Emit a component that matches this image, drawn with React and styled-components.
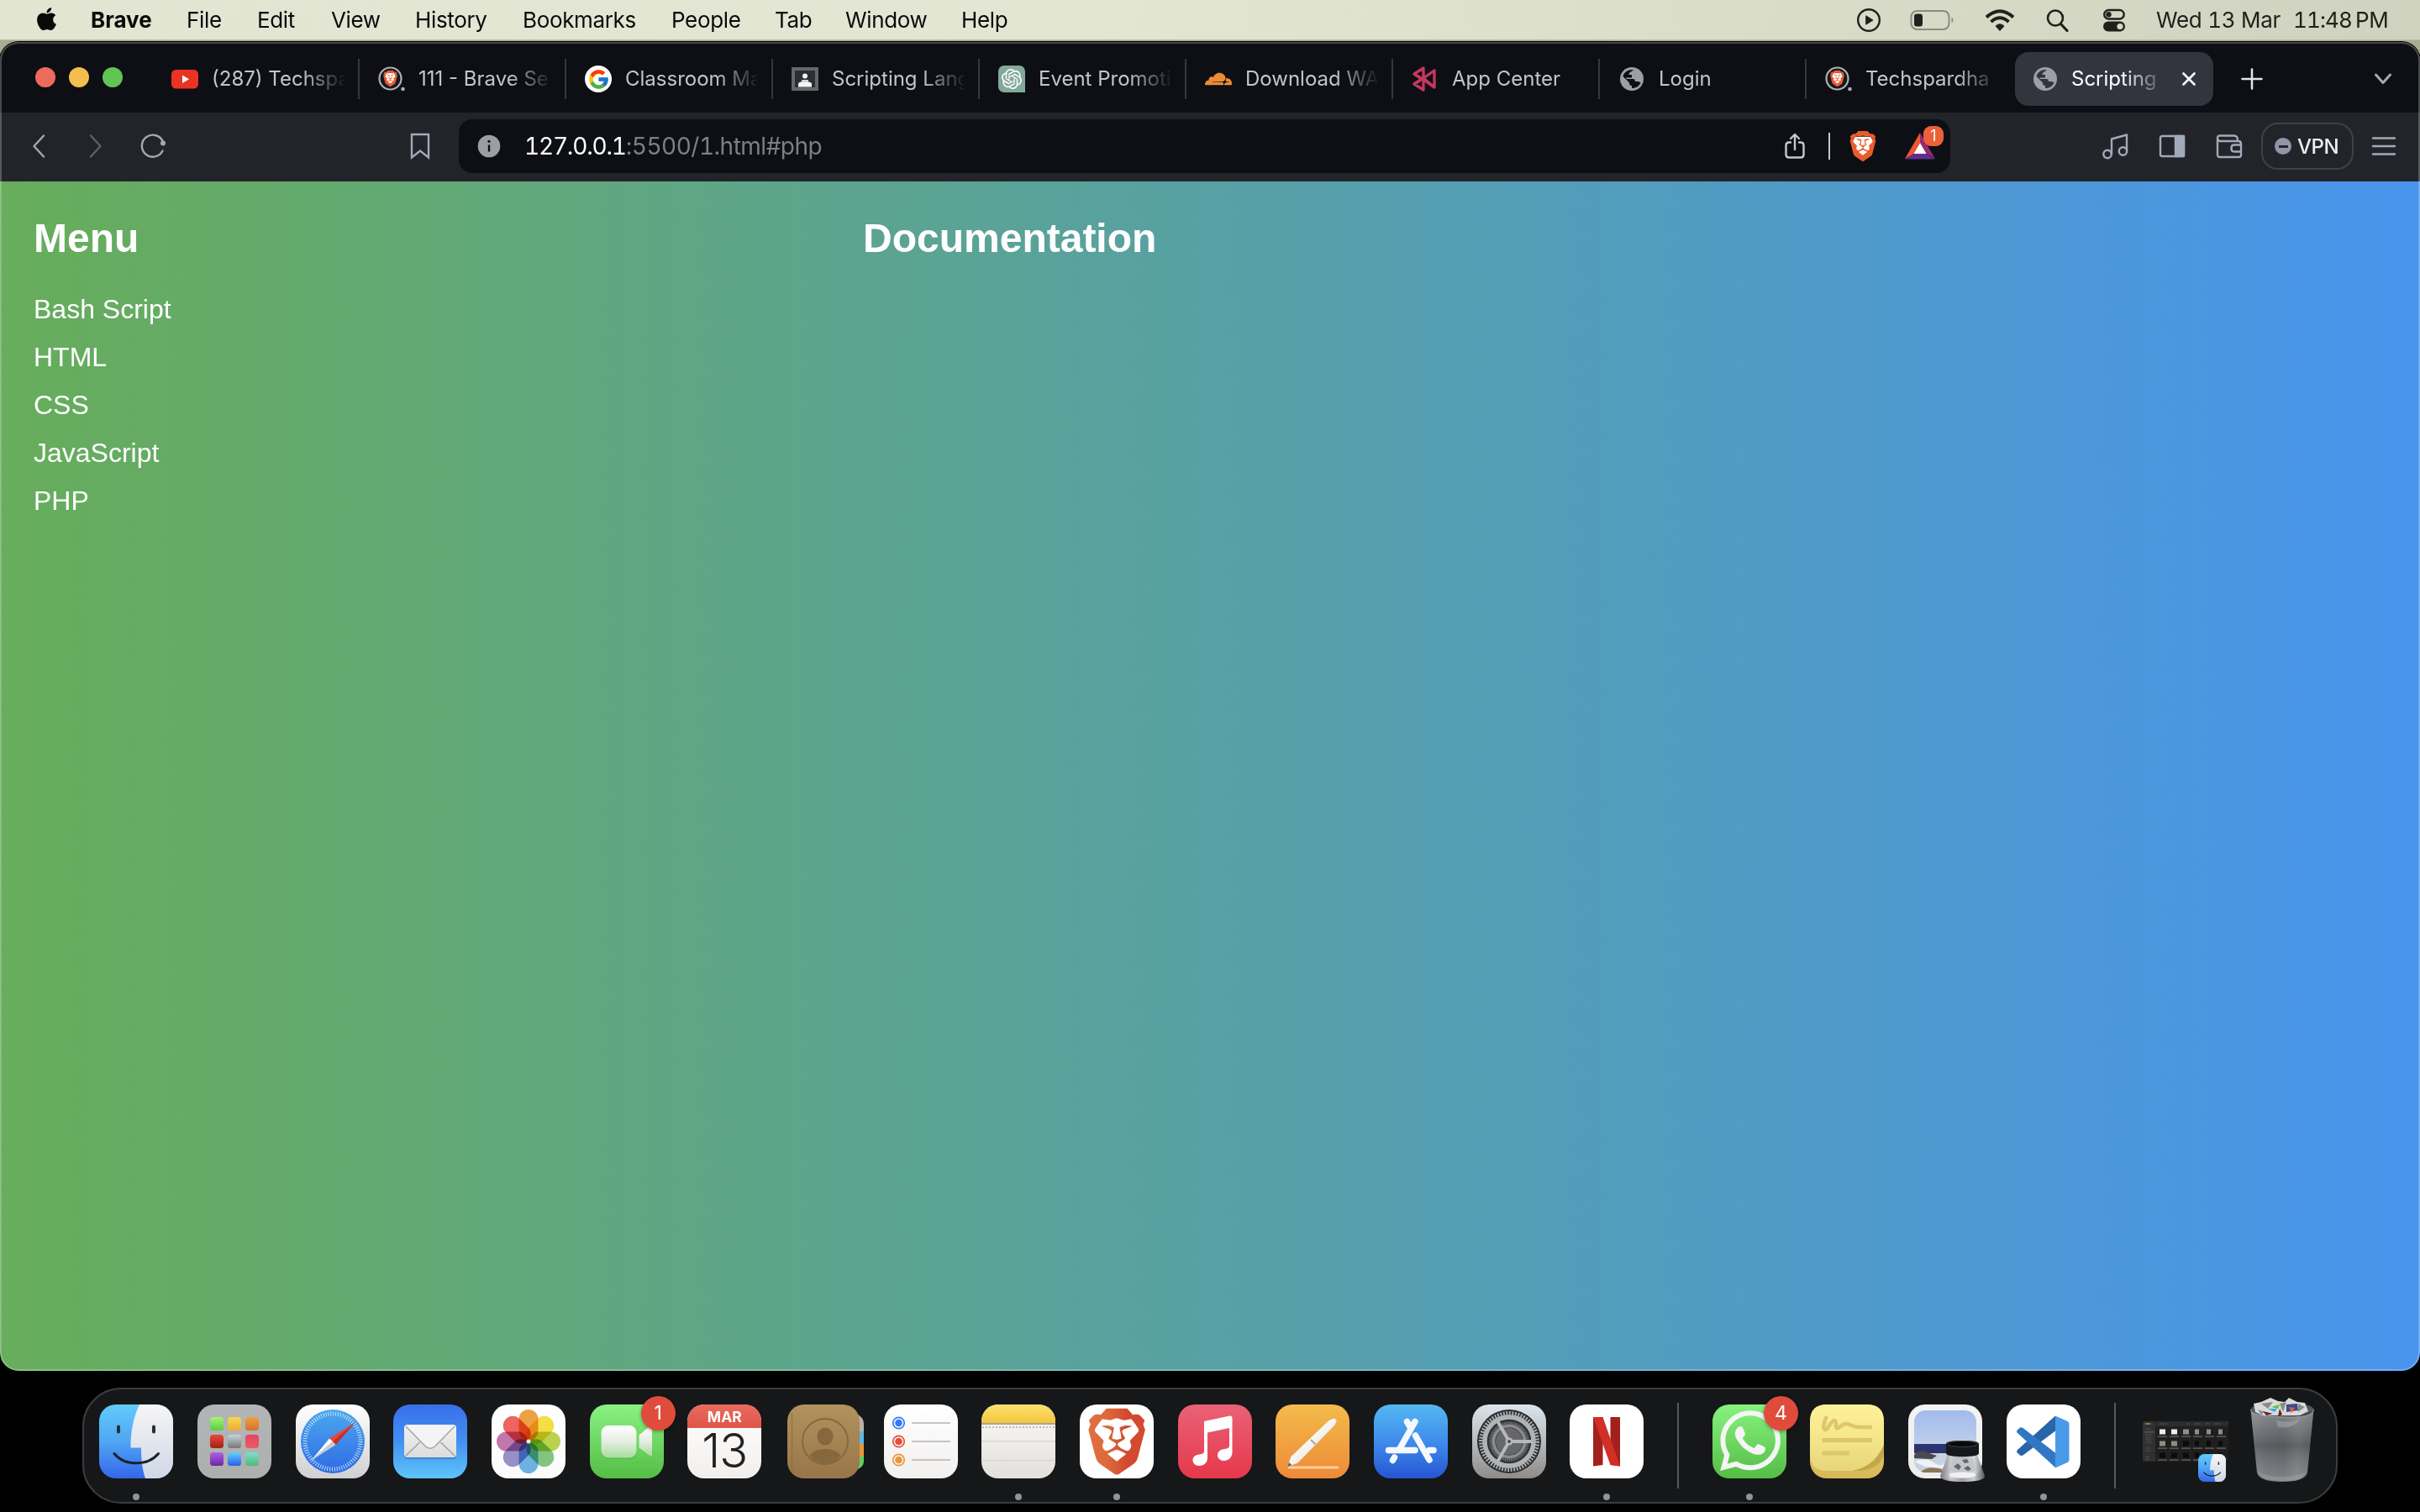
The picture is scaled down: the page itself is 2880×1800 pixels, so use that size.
import React from "react";
import styled, { createGlobalStyle, css } from "styled-components";
import { FaApple, FaWhatsapp } from "react-icons/fa";
import { FcGoogle } from "react-icons/fc";
import { SiBrave, SiOpenai, SiCloudflare } from "react-icons/si";

const UI = `Inter, "Noto Sans", sans-serif`;
const PAGE = `"Liberation Sans", Arial, sans-serif`;

const Global = createGlobalStyle`
  * { box-sizing: border-box; }
  body { margin: 0; background: #000; overflow: hidden; }
  svg { display: block; flex: none; }
`;

const Desktop = styled.div`
  width: 2880px;
  height: 1800px;
  display: flex;
  flex-direction: column;
  align-items: center;
  font-family: ${UI};
  background: linear-gradient(to bottom, #a9ac91 0, #a9ac91 120px, #000 600px);
`;

/* ---------- menu bar ---------- */
const MenuBar = styled.header`
  width: 100%;
  height: 48px;
  flex: none;
  display: flex;
  align-items: center;
  justify-content: space-between;
  padding: 0 37px 0 40px;
  background: linear-gradient(to right, #e1e5d2 0, #e2e6d3 45%, #dcdfcb 66%, #cfd2be 100%);
  color: #0a0a08;
  border-bottom: 1px solid #b8bba3;
`;
const MenuSide = styled.div`
  display: flex;
  align-items: center;
  height: 100%;
`;
const StatusSide = styled(MenuSide)`
  color: #20211c;
`;
const AppleSlot = styled.span`
  width: 68px;
  font-size: 31px;
  margin-top: -2px;
  display: flex;
`;
const MenuItem = styled.span`
  width: ${(p) => p.$w}px;
  white-space: nowrap;
  font-size: 26px;
  line-height: 46px;
  font-weight: ${(p) => (p.$strong ? 700 : 400)};
  letter-spacing: ${(p) => (p.$strong ? 0 : -0.35)}px;
`;
const StatusSlot = styled.span`
  width: ${(p) => p.$w}px;
  display: flex;
  align-items: center;
`;
const Clock = styled.span`
  width: ${(p) => p.$w}px;
  white-space: nowrap;
  font-size: 26px;
  line-height: 46px;
  letter-spacing: ${(p) => p.$ls || -0.3}px;
  font-variant-numeric: tabular-nums;
`;

const MENUS = [
  ["Brave", 114], ["File", 84], ["Edit", 88], ["View", 100], ["History", 128],
  ["Bookmarks", 177], ["People", 123], ["Tab", 84], ["Window", 138], ["Help", 60],
];

/* ---------- browser window ---------- */
const Window = styled.main`
  position: relative;
  width: 100%;
  height: 1582px;
  margin-top: 2px;
  flex: none;
  display: flex;
  flex-direction: column;
  border-radius: 22px;
  overflow: hidden;
  box-shadow: 0 0 0 1px #000;
  &::after {
    content: "";
    position: absolute;
    inset: 0;
    border-radius: inherit;
    box-shadow: inset 0 0 0 2px rgba(255, 255, 255, 0.24);
    pointer-events: none;
  }
`;
const TabStrip = styled.div`
  height: 84px;
  flex: none;
  display: flex;
  align-items: center;
  background: #0e0f14;
  padding: 4px 0 0 42px;
`;
const Lights = styled.div`
  width: 140px;
  display: flex;
  gap: 16px;
  margin-top: -4px;
`;
const Light = styled.i`
  width: 24px;
  height: 24px;
  border-radius: 50%;
  background: ${(p) => p.$c};
`;
const fade = css`
  mask-image: linear-gradient(to right, #000 calc(100% - 50px), rgba(0, 0, 0, 0.06) 100%);
`;
const Tab = styled.div`
  width: 246px;
  height: 48px;
  display: flex;
  align-items: center;
  gap: 16px;
  padding-left: 22px;
  color: #c4c5c9;
  border-right: 2px solid ${(p) => (p.$plain ? "transparent" : "#36383e")};
`;
const ActiveTab = styled(Tab)`
  width: 236px;
  height: 64px;
  margin-left: 2px;
  border: 0;
  border-radius: 16px;
  background: #32343e;
  color: #fff;
  gap: 15px;
  padding: 0 20px;
`;
const TabTitle = styled.span`
  width: ${(p) => p.$w || 157}px;
  white-space: nowrap;
  font-size: 24px;
  line-height: 40px;
  ${(p) => p.$fade && fade}
`;
const CloseSlot = styled.span`
  margin-left: auto;
`;
const Favicon = styled.span`
  width: 32px;
  height: 32px;
  flex: none;
  display: flex;
  align-items: center;
  justify-content: center;
`;
const NewTab = styled.span`
  width: 92px;
  display: flex;
  justify-content: center;
`;
const TabSearch = styled.span`
  margin-left: auto;
  margin-right: 33px;
`;

const Toolbar = styled.div`
  height: 82px;
  flex: none;
  display: flex;
  align-items: center;
  padding: 0 8px 2px 12px;
  background: #23242a;
  color: #a2a9b9;
`;
const Tool = styled.span`
  width: 68px;
  height: 68px;
  flex: none;
  display: flex;
  align-items: center;
  justify-content: center;
  opacity: ${(p) => (p.$dim ? 0.45 : 1)};
  margin-left: ${(p) => p.$ml || 0}px;
`;
const AddressBar = styled.div`
  width: 1775px;
  height: 64px;
  flex: none;
  margin-left: 12px;
  display: flex;
  align-items: center;
  border-radius: 16px;
  background: #0e0f14;
  padding: 0 8px 0 22px;
`;
const Url = styled.span`
  flex: 1;
  margin-left: 28px;
  font-size: 28px;
  line-height: 40px;
  color: #7d7f85;
  letter-spacing: -0.5px;
  font-variant-numeric: tabular-nums;
  b { font-weight: 400; color: #fff; letter-spacing: -1.2px; }
`;
const Rule = styled.i`
  width: 2px;
  height: 32px;
  background: #c7c8cc;
  margin: 0 21px 0 27px;
`;
const Rewards = styled.span`
  position: relative;
  width: 46px;
  height: 48px;
  margin-left: 32px;
  padding-top: 8px;
`;
const Count = styled.b`
  position: absolute;
  top: 0;
  right: 0;
  width: 24px;
  height: 24px;
  border-radius: 9px;
  background: #ec6139;
  color: #fff;
  font-size: 18px;
  font-weight: 400;
  line-height: 24px;
  text-align: center;
`;
const Vpn = styled.span`
  width: 110px;
  height: 56px;
  flex: none;
  margin-left: 4px;
  display: flex;
  align-items: center;
  gap: 7px;
  padding-left: 14px;
  border: 2px solid #3b424d;
  border-radius: 20px;
  color: #eceef2;
  font-size: 24px;
  font-weight: 500;
  letter-spacing: -0.4px;
`;
const VpnDot = styled.i`
  width: 20px;
  height: 20px;
  border-radius: 50%;
  background: #9295a8;
  display: flex;
  align-items: center;
  justify-content: center;
  &::before { content: ""; width: 11px; height: 3px; background: #23242a; }
`;

/* ---------- page ---------- */
const Page = styled.section`
  flex: 1;
  display: flex;
  background: linear-gradient(to right, #67ad5b, #4894ed);
  color: #fff;
  font-family: ${PAGE};
`;
const Sidebar = styled.nav`
  width: 987px;
  padding: 40px;
`;
const Docs = styled.article`
  flex: 1;
  padding: 40px;
`;
const Heading = styled.h2`
  margin: 0 0 38px;
  font-size: 48px;
  line-height: 56px;
  font-weight: 700;
`;
const Links = styled.ul`
  list-style: none;
  margin: 0;
  padding: 0;
  display: flex;
  flex-direction: column;
  gap: 20px;
  font-size: 32px;
  line-height: 37px;
`;

/* ---------- dock ---------- */
const Dock = styled.footer`
  width: 2684px;
  height: 138px;
  margin-top: 20px;
  flex: none;
  display: flex;
  padding: 0 4px;
  border: 2px solid #3b3c3d;
  border-radius: 46px;
  background: #161718;
`;
const DockCell = styled.div`
  width: 116.67px;
  height: 134px;
  flex: none;
  display: flex;
  flex-direction: column;
  align-items: center;
  padding-top: 18px;
`;
const DockTile = styled.div`
  position: relative;
  width: 88px;
  height: 88px;
`;
const WindowTile = styled(DockTile)`
  width: 102px;
  padding-top: 20px;
`;
const Running = styled.i`
  width: 8px;
  height: 8px;
  margin-top: 18px;
  border-radius: 50%;
  background: #929394;
`;
const DockBadge = styled.b`
  position: absolute;
  top: -10px;
  right: -14px;
  width: 41px;
  height: 41px;
  border-radius: 50%;
  background: #df4c3c;
  box-shadow: 0 1px 4px rgba(0, 0, 0, 0.4);
  color: #fff;
  font-size: 23px;
  font-weight: 400;
  line-height: 41px;
  text-align: center;
`;
const DockRule = styled.div`
  width: 53px;
  flex: none;
  display: flex;
  justify-content: center;
  padding-top: 16px;
  &::before { content: ""; width: 2px; height: 102px; background: #58595a; }
`;
const MiniBadge = styled.span`
  position: absolute;
  right: 3px;
  bottom: -4px;
`;

/* ---------- icons ---------- */
const Grad = ({ id, stops, x2 = 0, y2 = 1 }) => (
  <linearGradient id={id} x1="0" y1="0" x2={x2} y2={y2}>
    {stops.map((c, i) => (
      <stop key={i} offset={i / (stops.length - 1)} stopColor={c} />
    ))}
  </linearGradient>
);
const TileSvg = styled.svg`
  overflow: visible;
`;
const Tile = ({ id, stops, children, size = 88 }) => (
  <TileSvg width={size} height={size} viewBox="0 0 88 88">
    <defs>
      <Grad id={id} stops={stops} />
      <clipPath id={id + "-clip"}><rect width="88" height="88" rx="20" /></clipPath>
    </defs>
    <rect width="88" height="88" rx="20" fill={`url(#${id})`} />
    {children}
  </TileSvg>
);

const Finder = ({ id = "fd", size }) => (
  <Tile id={id} stops={["#62cbfa", "#4fa6f3", "#3566ea"]} size={size}>
    <defs><Grad id={id + "w"} stops={["#f6f5f5", "#cfd8e6"]} /></defs>
    <path clipPath={`url(#${id}-clip)`} d="M48 0C41 14 37 34 37.500 51.500H50C50 66 51.500 78 55 88H88V0Z" fill={`url(#${id}w)`} />
    <path d="M23 26.500v6M65 26.500v6" stroke="#22303f" strokeWidth="4" strokeLinecap="round" />
    <path d="M18 58.500C30 73.500 58 73.500 70.500 58.500" fill="none" stroke="#1a222c" strokeWidth="3" strokeLinecap="round" />
  </Tile>
);
const LAUNCH = [
  ["#9df678", "#5fcc40"], ["#f8d84a", "#efab38"], ["#eba23e", "#d8702f"],
  ["#e64a3a", "#a51f16"], ["#c9d3d8", "#73767a"], ["#e8435e", "#ea5c68"],
  ["#b060e2", "#6b28a8"], ["#62d2fb", "#2a5ee6"], ["#82dccb", "#52b878"],
];
const Launchpad = () => (
  <Tile id="lp" stops={["#b3b4b8", "#adb0ad"]}>
    {LAUNCH.map((stops, i) => (
      <g key={i}>
        <defs><Grad id={"lp" + i} stops={stops} /></defs>
        <rect x={15 + (i % 3) * 21} y={15 + Math.floor(i / 3) * 21} width="16" height="16" rx="3.500" fill={`url(#lp${i})`} />
      </g>
    ))}
  </Tile>
);
const Safari = () => (
  <Tile id="sf" stops={["#ffffff", "#d0d0d2"]}>
    <defs><Grad id="sfb" stops={["#4aa8ee", "#2f6be4"]} /></defs>
    <circle cx="44" cy="44" r="38" fill="url(#sfb)" />
    <circle cx="44" cy="44" r="33" fill="none" stroke="#d5e8fb" strokeWidth="5" strokeDasharray="0.9 1.980" />
    <path d="M71 21 40 40.500 47.500 48Z" fill="#e8453a" />
    <path d="M71 21 47.500 48 44 44Z" fill="#c42f2b" />
    <path d="M18 67 40 40.500 44 44Z" fill="#fff" />
    <path d="M18 67 47.500 48 44 44Z" fill="#c9ccd2" />
  </Tile>
);
const Mail = () => (
  <Tile id="ml" stops={["#386fea", "#4390f1", "#5cc5fa"]}>
    <defs><Grad id="mle" stops={["#f2f2f2", "#dcdcdc"]} /></defs>
    <rect x="13" y="25" width="62" height="40" rx="4" fill="rgba(0,40,120,.25)" />
    <rect x="13" y="24" width="62" height="39" rx="4" fill="url(#mle)" />
    <path d="M15 61 31.500 45M73 61 56.500 45" stroke="#9a9a9a" strokeWidth="1.200" />
    <path d="M15 26 38 49.500Q44 55 50 49.500L73 26" fill="#f4f4f4" stroke="#a2a2a2" strokeWidth="1.400" />
  </Tile>
);
const Petal = styled.rect`
  mix-blend-mode: multiply;
`;
const Photos = () => {
  const petals = ["#f09c3a", "#f4de3a", "#b9d244", "#7cc57c", "#67b0e4", "#958bc8", "#c171a8", "#ec5d55"];
  return (
    <Tile id="ph" stops={["#ffffff", "#fbfbfb"]}>
      {petals.map((c, i) => (
        <Petal key={i} x="32.500" y="6" width="23" height="37" rx="11.500" fill={c} transform={`rotate(${i * 45} 44 44)`} opacity=".95" />
      ))}
      <circle cx="44" cy="44" r="2.500" fill="#f0ece0" />
    </Tile>
  );
};
const FaceTime = () => (
  <Tile id="ft" stops={["#89f283", "#54bd45"]}>
    <defs><Grad id="ftcam" stops={["#ffffff", "#e4eee2", "#a8dc9c"]} /></defs>
    <rect x="13.500" y="26.500" width="42" height="38.500" rx="8.500" fill="#3f9c36" opacity=".35" />
    <rect x="13.500" y="25" width="42" height="38.500" rx="8.500" fill="url(#ftcam)" />
    <path d="M58.500 36.500 70 27Q74 24.500 74 29V59Q74 63 70 60L58.500 51.500Z" fill="url(#ftcam)" />
  </Tile>
);
const CalTop = styled.div`
  position: absolute;
  inset: 0 0 auto;
  height: 27.5px;
  border-radius: 20px 20px 0 0;
  background: linear-gradient(#ec6a5f, #dd5549);
  color: #fff;
  font: 700 17.5px/30px ${UI};
  text-align: center;
`;
const CalDay = styled.div`
  position: absolute;
  inset: 26px 0 0;
  color: #222;
  font: 300 56px/58px ${UI};
  letter-spacing: -1px;
  text-align: center;
`;
const Calendar = () => (
  <>
    <Tile id="cl" stops={["#ffffff", "#f1efed"]} />
    <CalTop>MAR</CalTop>
    <CalDay>13</CalDay>
  </>
);
const Contacts = () => (
  <svg width="94" height="88" viewBox="0 0 94 88">
    <defs><Grad id="ct" stops={["#b1935c", "#98754a"]} /></defs>
    <path d="M84 11q9 4 9 12v9h-9z" fill="#b7b3a6" />
    <path d="M84 32h9v15h-9z" fill="#5fb5e6" />
    <path d="M84 47h9v15h-9z" fill="#e8953a" />
    <path d="M84 62h9v6q0 6-9 10z" fill="#62cf62" />
    <rect x="2" width="86" height="88" rx="20" fill="url(#ct)" />
    <path d="M7.500 10v68" stroke="#8a6b40" strokeWidth="1.500" opacity=".7" />
    <circle cx="47" cy="44" r="27" fill="none" stroke="#86683f" strokeWidth="2" />
    <ellipse cx="47" cy="38" rx="9.500" ry="10.500" fill="#86683f" />
    <path d="M28.500 61Q34 53 47 53T65.500 61Q58 70.500 47 70.500T28.500 61Z" fill="#86683f" />
  </svg>
);
const Reminders = () => (
  <Tile id="rm" stops={["#ffffff", "#f2f0ee"]}>
    {["#3478f6", "#e64d3d", "#e9963a"].map((c, i) => (
      <g key={c}>
        <circle cx="17.500" cy={22 + i * 22} r="6.700" fill="none" stroke={c} strokeWidth="1.700" />
        <circle cx="17.500" cy={22 + i * 22} r="4.300" fill={c} />
        <path d={`M33 ${22 + i * 22}h46`} stroke="#b3b3b6" strokeWidth="1.600" />
      </g>
    ))}
  </Tile>
);
const Notes = () => (
  <Tile id="nt" stops={["#fbfaf9", "#e2e0db"]}>
    <defs><Grad id="nty" stops={["#fbe073", "#f5c63c"]} /></defs>
    <path clipPath="url(#nt-clip)" d="M0 0H88V22H0Z" fill="url(#nty)" />
    <path d="M0 23H88" stroke="#a8a496" strokeWidth="2" />
    <path d="M1 27H88" stroke="#bdbbb6" strokeWidth="2" strokeDasharray="2 2" />
    <path d="M0 44H88M0 66.500H88" stroke="#d8d6d4" strokeWidth="1.600" />
  </Tile>
);
const LionTile = () => (
  <Tile id="br" stops={["#ffffff", "#ffffff"]}>
    <defs><Grad id="brg" x2={1} y2={0} stops={["#df7040", "#dc6a3c", "#d24a30", "#d5492f"]} /></defs>
    <g transform="translate(4.500 4.500) scale(3.300)">
      <SiBrave size={24} fill="url(#brg)" />
    </g>
  </Tile>
);
const Lion = () => (
  <svg width="36" height="36" viewBox="0 0 24 24">
    <path d="M6 4.500H18L20 8 18 17 12 22 6 17 4 8Z" fill="#fff" />
    <SiBrave size={24} color="#ea5c2b" />
  </svg>
);
const Music = () => (
  <Tile id="mu" stops={["#ea6277", "#e5384a"]}>
    <path fill="#fff" d="M31 20 61.500 13.500Q64.500 13 64.500 16V57C64.500 63 60 67 54.500 67C50 67 47 64 47 60.500C47 56.500 50 54 54 53.300L58 52.500Q61 51.800 61 49V28L35 33.500V63.500C35 69 31 73 25 73C20.500 73 17.500 70 17.500 66.500C17.500 62.500 20 60.500 24 59.700L28 59Q31 58.300 31 55.500Z" />
  </Tile>
);
const PagesApp = () => (
  <Tile id="pg" stops={["#f3bb4b", "#ee8a38"]}>
    <defs><Grad id="pgp" x2={1} stops={["#ffffff", "#f6f4f2", "#c9c5c2"]} /></defs>
    <path d="M16 75H74" stroke="#fbcf9c" strokeWidth="3" strokeLinecap="round" />
    <path d="M14 74.500 18.500 62 63 19.500Q69 15.500 71.500 17.500T70 25L26.500 69.500Z" fill="url(#pgp)" />
    <path d="M42 42 47.500 47.500" stroke="#a8a29c" strokeWidth="2" />
    <path d="M14 74.500 16 69 19.500 72Z" fill="#6d6761" />
  </Tile>
);
const AppStore = () => (
  <Tile id="as" stops={["#55b8f1", "#3f8cec", "#2655d4"]}>
    <g stroke="#f5f9ff" strokeWidth="7.500" strokeLinecap="round" fill="none">
      <path d="M39.500 20.500 43 26.500M49.500 37 66 66" />
      <path d="M49 20.500 30 54M22.500 66.500 24.500 63" />
      <path d="M17.500 54.500H49M66 54.500H71" />
    </g>
  </Tile>
);
const Settings = () => (
  <Tile id="st" stops={["#dbe5ec", "#b8bbbd", "#8f8b88"]}>
    <circle cx="44" cy="44" r="38" fill="#2c2c2e" />
    <circle cx="44" cy="44" r="33.500" fill="none" stroke="#a9adb0" strokeWidth="5" strokeDasharray="1.900 1.600" />
    <circle cx="44" cy="44" r="29" fill="none" stroke="#aeb3b6" strokeWidth="5.500" />
    <circle cx="44" cy="44" r="25" fill="#3d3d3f" />
    <circle cx="44" cy="44" r="21.500" fill="none" stroke="#77797b" strokeWidth="3.500" strokeDasharray="1.300 1.200" />
    <circle cx="44" cy="44" r="18.500" fill="none" stroke="#8a8c8e" strokeWidth="3.500" />
    <circle cx="44" cy="44" r="16" fill="#67676a" />
    <path d="M44 44H71M44 44 30.500 20.600M44 44 30.500 67.400" stroke="#b4b9bc" strokeWidth="4" />
    <circle cx="44" cy="44" r="4.500" fill="#b4b9bc" />
    <circle cx="44" cy="44" r="1.800" fill="#3a3a3c" />
  </Tile>
);
const Netflix = () => (
  <Tile id="nf" stops={["#ffffff", "#ffffff"]}>
    <path d="M28 15H39.500V72L28 73.500ZM48.500 15H60V73.500L48.500 72Z" fill="#a3211c" />
    <path d="M28 15H39.500L60 73.500L48.500 72Z" fill="#d22f27" />
  </Tile>
);
const WhatsApp = () => (
  <Tile id="wa" stops={["#87f27f", "#55bd46"]}>
    <g transform="translate(4 2)"><FaWhatsapp size={82} color="#f4f5f4" /></g>
  </Tile>
);
const Stickies = () => (
  <Tile id="sk" stops={["#e8cf70", "#d8b95a"]}>
    <defs><Grad id="sky" stops={["#fdf199", "#f5e689", "#e6d67a"]} /></defs>
    <path d="M0 20Q0 0 20 0H68Q88 0 88 20V48C80 66 68 76 50 79H20Q2 79 0 62Z" fill="url(#sky)" />
    <path d="M88 48C80 66 68 76 50 79 72 80 86 72 88 58Z" fill="#c3a64c" />
    <g fill="none" stroke="#dcc76c" strokeWidth="5">
      <path d="M20 14C16 22 15 29 18 30S25 19 29 19 29 29 33 28 38 22 44 23 50 27 58 27H74" strokeWidth="4.500" />
      <path d="M14.500 42.500H74M14.500 58H46.500" />
    </g>
  </Tile>
);
const Preview = () => (
  <Tile id="pv" stops={["#f3f3f4", "#ededee"]}>
    <defs>
      <Grad id="pvs" stops={["#9bb8ee", "#c0cee8"]} />
      <Grad id="pvj" x2={1} y2={0} stops={["#6f7175", "#d2d3d6", "#a6a8ac", "#dcdde0", "#5d5f63"]} />
      <clipPath id="pvi"><rect x="7" y="7" width="74" height="74" rx="14" /></clipPath>
    </defs>
    <g clipPath="url(#pvi)">
      <rect width="88" height="48" fill="url(#pvs)" />
      <rect y="47" width="88" height="14" fill="#2c3470" />
      <rect y="58" width="88" height="30" fill="#c8d2e0" />
      <path d="M7 60Q14 53 22 57L34 61 28 65 7 64Z" fill="#4a4850" />
      <path d="M7 68Q20 62 30 69T44 68V76L20 74Z" fill="#eef2f6" />
      <path d="M14 81Q22 72 40 77V84H14Z" fill="#8d7559" />
    </g>
    <path d="M47 60H82L91 85Q91 92 64.500 92T38 85Z" fill="url(#pvj)" opacity=".93" />
    <path d="M52 64H77L80 79Q64 84 50 79Z" fill="#c3c5c9" />
    <path d="M54 74l5-4 4 4-3 4zM64 66l6-1 2 4-5 1zM66 76l5-3 4 4-4 2z" fill="#64676e" />
    <ellipse cx="64.500" cy="84" rx="16" ry="3.600" fill="#f0f0f1" />
    <path d="M45 47Q45 43 64.500 43T84 47V58Q84 62 64.500 62T45 58Z" fill="#17181b" />
    <ellipse cx="64.500" cy="47" rx="18" ry="3.500" fill="#08090a" stroke="#4b4d50" strokeWidth=".8" />
  </Tile>
);
const VSCode = () => (
  <Tile id="vs" stops={["#ffffff", "#ffffff"]}>
    <path d="M12.500 54.500 58 13.500V31.500L19.500 60.500Q17 61.500 15.500 60L12.700 57.500Q11.500 56 12.500 54.500Z" fill="#2a65a8" />
    <path d="M12.500 33.500Q11.500 32 12.700 30.500L15.500 28Q17 26.700 19.500 28L58 57.500V75Z" fill="#3277c6" />
    <path d="M58 13.500 72.500 20Q74.500 21 74.500 23V66Q74.500 68 72.500 69L58 75.500Z" fill="#4a9aea" />
  </Tile>
);
const FinderWindow = () => (
  <svg width="102" height="48" viewBox="0 0 102 48">
    <rect width="102" height="48" rx="3" fill="#1f1f20" />
    <path d="M0 3q0-3 3-3h12v48H3q-3 0-3-3z" fill="#303031" />
    <rect x="15" width="87" height="6" fill="#2b2b2c" />
    <circle cx="3.500" cy="3" r="1.100" fill="#e5594f" /><circle cx="6" cy="3" r="1.100" fill="#e0a93c" /><circle cx="8.500" cy="3" r="1.100" fill="#55b849" />
    <rect x="2" y="11.500" width="12" height="2.500" fill="#4a4a4b" />
    <path d="M3 9h7M3 16h8M3 19h7M3 22h7M3 25h8M3 32h6M3 35h7M3 42h5M3 45h5" stroke="#535354" strokeWidth="1" />
    <path d="M19 3h10M52 3h4M61 3h8M74 3h6M85 3h8" stroke="#505051" strokeWidth="1" />
    {[0, 1, 2].map((r) => [0, 1, 2, 3, 4, 5].map((c) => (
      <g key={r + "-" + c}>
        <rect x={20 + c * 14} y={9.5 + r * 14} width={c > 2 ? 5 : 7} height="6" fill={r === 0 ? (c < 2 ? "#ededed" : "#8b8d90") : r === 1 && c < 2 ? "#8f8b80" : "#0b0b0d"} />
        <rect x={18 + c * 14} y={17.5 + r * 14} width="11" height="1.200" fill="#6c6c6d" />
      </g>
    )))}
  </svg>
);
const TrashSvg = styled.svg`
  margin: -9px 0 0 3px;
`;
const Trash = () => (
  <TrashSvg width="80" height="104" viewBox="0 0 80 104">
    <defs>
      <Grad id="tr" x2={1} y2={0} stops={["#7f8386", "#70757a", "#6a6f73", "#7b8084", "#686d70"]} />
      <Grad id="trs" stops={["rgba(255,255,255,.16)", "rgba(0,0,0,.2)", "rgba(255,255,255,.1)"]} />
    </defs>
    <ellipse cx="39" cy="15" rx="37.500" ry="9" fill="#52575a" />
    <path d="M7 18 5 8 14 6 25 1 34 5 42 6 47 1 57 6 66 7 70 17 60 22H16Z" fill="#d9d9d8" />
    <path d="M14 8 28 6 22 14ZM36 8 44 6 40 18ZM58 8 66 12 58 18ZM10 15 18 18 14 21Z" fill="#8b8b8c" />
    <path d="M26 12 36 9 34 14Z" fill="#54c545" /><path d="M22 14 33 14 30 18Z" fill="#38a9de" />
    <path d="M44 9 57 8 58 16 44 18Z" fill="#394b8c" /><path d="M47 12 54 13 50 19Z" fill="#d8602e" />
    <path d="M16 17 28 20 20 22ZM36 14 39 21 34 23Z" fill="#5d2420" />
    <path d="M1.500 15Q2 23 39 24T76.500 15L69 90Q66 101 39 101T9 90Z" fill="url(#tr)" />
    <path d="M1.500 15Q2 23 39 24T76.500 15L69 90Q66 101 39 101T9 90Z" fill="url(#trs)" />
    <path d="M1.500 15Q2 23 39 24T76.500 15" fill="none" stroke="#a2a6a8" strokeWidth="1" />
    <path d="M11 89Q20 95 39 95T67 89Q64 100 39 100T11 89Z" fill="#a3a7aa" opacity=".45" />
    <path d="M32 28Q50 32 60 26 54 38 34 36Z" fill="#b6babc" opacity=".4" />
  </TrashSvg>
);

/* favicons */
const YouTube = () => (
  <svg width="32" height="32" viewBox="0 0 32 32"><rect y="5" width="32" height="22.500" rx="5.500" fill="#ea3323" /><path d="M13 11.500 21 16.200 13 21Z" fill="#fff" /></svg>
);
const BraveSearch = () => (
  <svg width="32" height="32" viewBox="0 0 32 32">
    <circle cx="14.500" cy="15.500" r="13" fill="#17181e" stroke="#aeb0b8" strokeWidth="2.200" />
    <path d="M10 9H19L21 13 19 20 14.500 23 10 20 8 13Z" fill="#fff" />
    <g transform="translate(4.800 5.800)"><SiBrave size={19.5} color="#ea5a30" /></g>
    <circle cx="29.500" cy="28" r="2.300" fill="#aeb0b8" />
  </svg>
);
const GoogleFav = styled(Favicon)`
  border-radius: 50%;
  background: #fff;
`;
const OpenAIFav = styled(Favicon)`
  border-radius: 7px 7px 0 7px;
  background: #82a99c;
  color: #fff;
`;
const Classroom = () => (
  <svg width="32" height="32" viewBox="0 0 32 32">
    <rect y="2" width="32" height="28" fill="#64676b" /><rect x="4" y="6" width="24" height="20" fill="#2c2e33" />
    <circle cx="16" cy="12.500" r="3" fill="#f1f1f1" /><path d="M8 25.500V22q0-3 8-3t8 3v3.500z" fill="#f6f6f6" /><rect x="12" y="17" width="8" height="3" fill="#d4d4d4" />
  </svg>
);
const AppCenter = () => (
  <svg width="32" height="32" viewBox="0 0 32 32" fill="none" stroke="#c4375d" strokeWidth="3.300" strokeLinejoin="round">
    <path d="M14 3 3 10 14 17V3ZM14 15 3 22 14 29ZM14 15 27 6V26Z" /><path d="M3 10 14 17 27 26M3 22 14 15" />
  </svg>
);
const Globe = ({ hole = "#0e0f14" }) => (
  <svg width="28" height="28" viewBox="0 0 28 28">
    <circle cx="14" cy="14" r="14" fill="#9ba0a6" />
    <path d="M16 3C13 6 10.500 6 10.500 9H14V12.500H7.500V14H15.500Q18 14 18 17H21.500Q23.500 17 24.500 18.500C22.500 23 18.500 25 14 25V22Q11 22 11 18.500L3.500 11C4.500 6 9.500 2.500 16 3Z" fill={hole} />
  </svg>
);

const S = ({ w = 32, h = 32, sw = 2.4, children, ...rest }) => (
  <svg width={w} height={h} viewBox={`0 0 ${w} ${h}`} fill="none" stroke="currentColor" strokeWidth={sw} strokeLinecap="round" strokeLinejoin="round" {...rest}>{children}</svg>
);

const TABS = [
  { t: "(287) Techspa", icon: <Favicon><YouTube /></Favicon>, f: true },
  { t: "111 - Brave Se", icon: <Favicon><BraveSearch /></Favicon>, f: true },
  { t: "Classroom Ma", icon: <GoogleFav><FcGoogle size={27} /></GoogleFav>, f: true },
  { t: "Scripting Lang", icon: <Favicon><Classroom /></Favicon>, f: true },
  { t: "Event Promoti", icon: <OpenAIFav><SiOpenai size={24} /></OpenAIFav>, f: true },
  { t: "Download WA", icon: <Favicon><SiCloudflare size={32} color="#ee8b38" /></Favicon>, f: true },
  { t: "App Center", icon: <Favicon><AppCenter /></Favicon> },
  { t: "Login", icon: <Favicon><Globe /></Favicon> },
  { t: "Techspardha -", icon: <Favicon><BraveSearch /></Favicon>, f: true, plain: true },
];

const DOCK = [
  [Finder, { run: true }], [Launchpad], [Safari], [Mail], [Photos], [FaceTime, { badge: 1 }], [Calendar], [Contacts],
  [Reminders], [Notes, { run: true }], [LionTile, { run: true }], [Music], [PagesApp], [AppStore], [Settings], [Netflix, { run: true }],
  null,
  [WhatsApp, { run: true, badge: 4 }], [Stickies], [Preview], [VSCode, { run: true }],
  null,
];

export default function App() {
  return (
    <Desktop>
      <Global />
      <MenuBar>
        <MenuSide>
          <AppleSlot><FaApple /></AppleSlot>
          {MENUS.map(([m, w], i) => <MenuItem key={m} $w={w} $strong={i === 0}>{m}</MenuItem>)}
        </MenuSide>
        <StatusSide>
          <StatusSlot $w={64}>
            <S w={30} h={30}><circle cx="15" cy="15" r="12.800" /><path d="M12 10 20 15 12 20Z" fill="currentColor" strokeWidth="1" /></S>
          </StatusSlot>
          <StatusSlot $w={89}>
            <svg width="52" height="26" viewBox="0 0 52 26"><rect x="1.500" y="2" width="45" height="22" rx="7" fill="none" stroke="#8a8c7c" strokeWidth="2" /><rect x="5" y="5.500" width="10" height="15" rx="3" fill="#20211c" /><path d="M49.500 9.500q4 3.500 0 7z" fill="#8a8c7c" /></svg>
          </StatusSlot>
          <StatusSlot $w={73}>
            <S w={36} h={28} sw={4} strokeLinecap="butt"><path d="M2 10.500Q18-4 34 10.500M7.500 16Q18 6.500 28.500 16" /><path d="M13 21Q18 16.500 23 21L18 26.500Z" fill="currentColor" strokeWidth="1" /></S>
          </StatusSlot>
          <StatusSlot $w={67}>
            <S w={28} h={28} sw={2.6}><circle cx="11" cy="11.500" r="9" /><path d="M17.500 18.500 25 26.500" strokeWidth="3.200" /></S>
          </StatusSlot>
          <StatusSlot $w={64}>
            <svg width="28" height="28" viewBox="0 0 28 28"><rect x="2.200" y="2" width="23.500" height="10.500" rx="5.250" fill="none" stroke="#20211c" strokeWidth="2.400" /><circle cx="7.500" cy="7.250" r="3.200" fill="#20211c" /><rect x="1" y="15.500" width="26" height="12" rx="6" fill="#20211c" /><circle cx="21" cy="21.500" r="3.600" fill="#d4d7c3" /></svg>
          </StatusSlot>
          <Clock $w={163}>Wed 13 Mar</Clock>
          <Clock $w={74} $ls={-0.9}>11:48</Clock>
          <Clock $w={40}>PM</Clock>
        </StatusSide>
      </MenuBar>

      <Window>
        <TabStrip>
          <Lights><Light $c="#ed6a5e" /><Light $c="#f4be4f" /><Light $c="#61c554" /></Lights>
          {TABS.map((tab, i) => (
            <Tab key={i} $plain={tab.plain}>{tab.icon}<TabTitle $fade={tab.f}>{tab.t}</TabTitle></Tab>
          ))}
          <ActiveTab>
            <Favicon><Globe hole="#32343e" /></Favicon>
            <TabTitle $fade $w={110}>Scripting</TabTitle>
            <CloseSlot><S w={18} h={18} sw={2.6}><path d="M2.500 2.500 15.500 15.500M15.500 2.500 2.500 15.500" /></S></CloseSlot>
          </ActiveTab>
          <NewTab><S w={26} h={26} sw={2.5} color="#e4e5e9"><path d="M13 1.500V24.500M1.500 13H24.500" /></S></NewTab>
          <TabSearch><S w={22} h={14} sw={3} color="#a2a9b9"><path d="M2.500 2 11 11.500 19.500 2" /></S></TabSearch>
        </TabStrip>

        <Toolbar>
          <Tool><S w={16} h={30}><path d="M14 2.500 2.500 15 14 27.500" /></S></Tool>
          <Tool $dim><S w={16} h={30}><path d="M2 2.500 13.500 15 2 27.500" /></S></Tool>
          <Tool><S w={32} h={32}><path d="M27.500 21.500A13 13 0 1 1 28 11" /><circle cx="28" cy="12.500" r="3" fill="currentColor" stroke="none" /></S></Tool>
          <Tool $ml={250}><S w={24} h={32}><path d="M2 2H22V29.500L12 21.500 2 29.500Z" strokeLinejoin="miter" /></S></Tool>
          <AddressBar>
            <svg width="28" height="28" viewBox="0 0 28 28"><circle cx="14" cy="14" r="13.300" fill="#9b9ea3" /><path d="M14 12.500V20.500" stroke="#0e0f14" strokeWidth="2.400" /><circle cx="14" cy="8.300" r="1.600" fill="#0e0f14" /></svg>
            <Url><b>127.0.0.1</b>:5500/1.html#php</Url>
            <S w={26} h={32} color="#c7c8cc"><path d="M8 11.500H6Q2.500 11.500 2.500 15V26Q2.500 29.500 6 29.500H20Q23.500 29.500 23.500 26V15Q23.500 11.500 20 11.500H18M13 20V2.500M8 7 13 2 18 7" /></S>
            <Rule />
            <Lion />
            <Rewards>
              <svg width="36" height="32" viewBox="0 0 36 32"><path d="M18 0 36 31 18 20Z" fill="#952b6e" /><path d="M18 0 0 31 10 26 18 12Z" fill="#f0552f" /><path d="M0 31.500H36L26 25H10Z" fill="#5f2f90" /><path d="M18 12 25.500 25H10.500Z" fill="#fff" /></svg>
              <Count>1</Count>
            </Rewards>
          </AddressBar>
          <Tool $ml={162}><S><path d="M12 25.500V7.500L30 2.500V21.500" /><circle cx="7" cy="25.500" r="4.700" /><circle cx="25.500" cy="22" r="4.700" /></S></Tool>
          <Tool><S w={32} h={28}><rect x="2" y="2" width="28" height="24" rx="2" /><path d="M20 2H30V26H20Z" fill="currentColor" /></S></Tool>
          <Tool><S w={32} h={30}><path d="M26 9V7.500Q26 2.500 21.500 2.500H5Q2 2.500 2 5.500T5 9H26.500Q30 9 30 12V25.500Q30 28 27.500 28H5Q2 28 2 25V5.500M30 13.500H21.500Q18.500 13.500 18.500 17.500T21.500 21.500H30" /></S></Tool>
          <Vpn><VpnDot />VPN</Vpn>
          <Tool $ml={2}><S w={30} h={24}><path d="M2 2.500H28M2 12H28M2 21.500H28" /></S></Tool>
        </Toolbar>

        <Page>
          <Sidebar>
            <Heading>Menu</Heading>
            <Links>
              {["Bash Script", "HTML", "CSS", "JavaScript", "PHP"].map((l) => <li key={l}>{l}</li>)}
            </Links>
          </Sidebar>
          <Docs><Heading>Documentation</Heading></Docs>
        </Page>
      </Window>

      <Dock>
        {DOCK.map((d, i) => {
          if (!d) return <DockRule key={i} />;
          const [Icon, o = {}] = d;
          return (
            <DockCell key={i}>
              <DockTile><Icon />{o.badge && <DockBadge>{o.badge}</DockBadge>}</DockTile>
              {o.run && <Running />}
            </DockCell>
          );
        })}
        <DockCell>
          <WindowTile>
            <FinderWindow />
            <MiniBadge><Finder id="fm" size={33} /></MiniBadge>
          </WindowTile>
        </DockCell>
        <DockCell><DockTile><Trash /></DockTile></DockCell>
      </Dock>
    </Desktop>
  );
}
